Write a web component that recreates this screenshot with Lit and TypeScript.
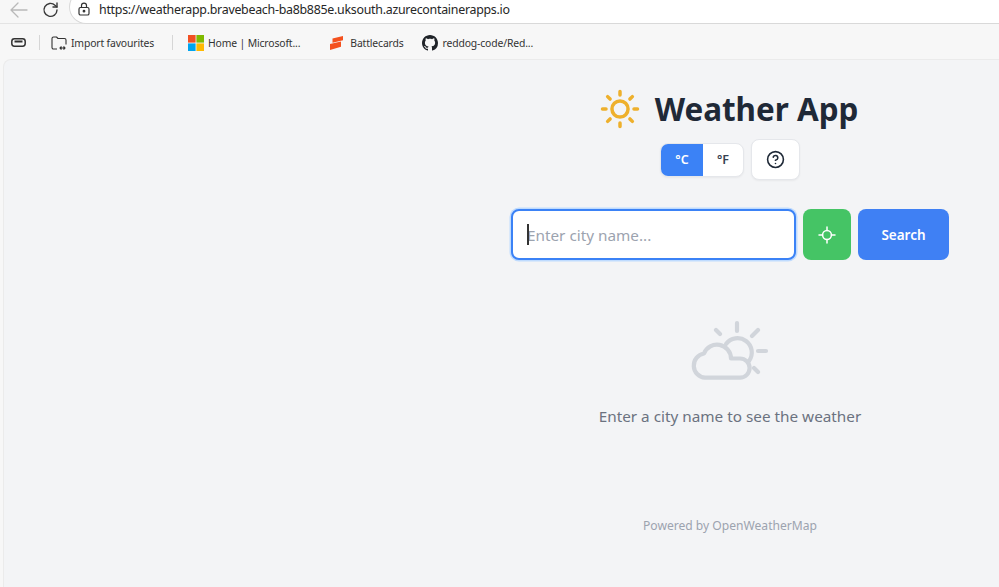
import { LitElement, html, css, svg } from 'lit';
import { customElement } from 'lit/decorators.js';

const sunIcon = svg`<svg class="sun" viewBox="0 0 24 24" fill="none" stroke="currentColor" stroke-width="2" stroke-linecap="round" stroke-linejoin="round">
  <circle cx="12" cy="12" r="4.6"></circle>
  <path d="M12 2v2M12 20v2M4.93 4.93l1.41 1.41M17.66 17.66l1.41 1.41M2 12h2M20 12h2M6.34 17.66l-1.41 1.41M19.07 4.93l-1.41 1.41"></path>
</svg>`;

const helpIcon = svg`<svg class="help" viewBox="0 0 24 24" fill="none" stroke="currentColor" stroke-width="2" stroke-linecap="round" stroke-linejoin="round">
  <circle cx="12" cy="12" r="10"></circle>
  <path d="M9.09 9a3 3 0 0 1 5.83 1c0 2-3 3-3 3"></path>
  <path d="M12 17h.01"></path>
</svg>`;

const locateIcon = svg`<svg class="locate" viewBox="0 0 18 18" fill="none" stroke="currentColor" stroke-width="1.5" stroke-linecap="round">
  <circle cx="9" cy="9" r="4.4"></circle>
  <path d="M1 9h3.5M13.5 9H17M9 1v3.5M9 13.5V17"></path>
</svg>`;

const cloudSunIcon = svg`<svg class="cloud" viewBox="0 0 80 64" fill="none" stroke="currentColor" stroke-width="4.2" stroke-linecap="round" stroke-linejoin="round">
  <path d="M48 3v8M27 10l4 4M63 16l6-6M69 31h8M65 48l4 4"></path>
  <path d="M37 24A13.5 13.5 0 0 1 60 41"></path>
  <path d="M16 57.7H51A9.6 9.6 0 0 0 51 38.5H42A14 14 0 0 0 15 33.5A12.2 12.2 0 0 0 16 57.7Z"></path>
</svg>`;

const github = svg`<svg class="fav" viewBox="0 0 16 16" fill="#1f2328"><path d="M8 0C3.58 0 0 3.58 0 8c0 3.54 2.29 6.53 5.47 7.59.4.07.55-.17.55-.38 0-.19-.01-.82-.01-1.49-2.01.37-2.53-.49-2.69-.94-.09-.23-.48-.94-.82-1.13-.28-.15-.68-.52-.01-.53.63-.01 1.08.58 1.23.82.72 1.21 1.87.87 2.33.66.07-.52.28-.87.51-1.07-1.78-.2-3.64-.89-3.64-3.95 0-.87.31-1.59.82-2.15-.08-.2-.36-1.02.08-2.12 0 0 .67-.21 2.2.82.64-.18 1.32-.27 2-.27.68 0 1.36.09 2 .27 1.53-1.04 2.2-.82 2.2-.82.44 1.1.16 1.92.08 2.12.51.56.82 1.27.82 2.15 0 3.07-1.87 3.75-3.65 3.95.29.25.54.73.54 1.48 0 1.07-.01 1.93-.01 2.2 0 .21.15.46.55.38A8.013 8.013 0 0 0 16 8c0-4.42-3.58-8-8-8z"></path></svg>`;

const microsoft = svg`<svg class="fav" viewBox="0 0 16 16">
  <rect x="0" y="0" width="7.6" height="7.6" fill="#f25022"></rect>
  <rect x="8.4" y="0" width="7.6" height="7.6" fill="#7fba00"></rect>
  <rect x="0" y="8.4" width="7.6" height="7.6" fill="#00a4ef"></rect>
  <rect x="8.4" y="8.4" width="7.6" height="7.6" fill="#ffb900"></rect>
</svg>`;

const battlecards = svg`<svg class="fav small" viewBox="0 0 14 14" fill="#f4511e">
  <path d="M2.5 2.6 13 0v4.2L2.5 6.8z"></path>
  <path d="M0 8 11 5.4v5.4L0 14z"></path>
</svg>`;

@customElement('app-root')
export class AppRoot extends LitElement {
  static styles = css`
    :host {
      display: flex;
      flex-direction: column;
      height: 587px;
      overflow: hidden;
      background: #f7f7f7;
      font-family: 'Noto Sans', 'Open Sans', sans-serif;
      color: #1f2937;
    }

    /* browser chrome */
    .addressbar {
      display: flex;
      align-items: center;
      height: 24px;
      flex: none;
      border-bottom: 1px solid #e4e4e4;
      box-sizing: border-box;
      padding-left: 9px;
      background: #f7f7f7;
    }
    .navicon {
      width: 20px;
      height: 20px;
      flex: none;
      margin-top: -4px;
    }
    .back { color: #b9b9b9; }
    .reload { color: #3a3a3a; margin-left: 12px; }
    .urlbox {
      flex: 1;
      display: flex;
      align-items: center;
      height: 34px;
      margin: -10px 0 0 8px;
      padding-top: 5px;
      box-sizing: border-box;
      background: #fff;
      border: 1px solid #d9d9d9;
      border-right: 0;
      border-radius: 17px 0 0 17px;
      font-size: 12.4px;
      letter-spacing: -0.27px;
      color: #262626;
    }
    .lock {
      width: 14px;
      height: 14px;
      margin-left: 7px;
      margin-right: 8px;
      color: #333;
    }
    .bookmarks {
      display: flex;
      align-items: center;
      height: 35px;
      flex: none;
      box-sizing: border-box;
      padding-top: 2px;
      font-size: 10.4px;
      letter-spacing: -0.15px;
      color: #333;
    }
    .pill {
      width: 15px;
      height: 9px;
      margin-left: 11px;
      color: #333;
    }
    .sep {
      width: 1px;
      height: 15px;
      background: #d6d6d6;
    }
    .sep.first { margin: 0 11px 0 13px; }
    .sep.second { margin: 0 15px 0 18px; }
    .bm {
      display: flex;
      align-items: center;
      gap: 5px;
      white-space: nowrap;
    }
    .fav {
      width: 16px;
      height: 16px;
      flex: none;
    }
    .fav.small { width: 14px; height: 14px; }
    .folder { width: 16px; height: 16px; color: #333; flex: none; }
    .bm.import { gap: 4px; }
    .bm.ms { margin-right: 30px; gap: 4px; }
    .bm.bc { margin-right: 18px; gap: 6px; }

    /* page */
    .page {
      flex: 1;
      margin-left: 3px;
      background: #f3f4f6;
      border-top: 1px solid #ebebeb;
      border-left: 1px solid #ebebeb;
      border-top-left-radius: 8px;
      display: flex;
      flex-direction: column;
      align-items: center;
      padding-left: 507px;
      padding-right: 50px;
      box-sizing: border-box;
    }
    .title {
      display: flex;
      align-items: center;
      gap: 14px;
      height: 44px;
      margin-top: 27px;
      margin-right: 3px;
    }
    .sun {
      width: 42px;
      height: 42px;
      color: #eeb02c;
    }
    h1 {
      margin: 0;
      font-size: 31.4px;
      line-height: 44px;
      font-weight: 700;
      color: #1f2937;
      white-space: nowrap;
    }
    .units {
      display: flex;
      align-items: center;
      gap: 7px;
      margin-top: 8px;
    }
    .toggle {
      display: flex;
      width: 84px;
      height: 34px;
      box-sizing: border-box;
      border: 1px solid #e5e7eb;
      border-radius: 8px;
      background: #fff;
      box-shadow: 0 1px 2px rgba(0, 0, 0, 0.05);
      overflow: hidden;
    }
    .toggle span {
      flex: 1;
      display: flex;
      align-items: center;
      justify-content: center;
      font-size: 12.5px;
      font-weight: 600;
      color: #374151;
    }
    .toggle .on {
      flex: none;
      width: 42px;
      background: #3b82f6;
      color: #fff;
    }
    .helpbtn {
      width: 49px;
      height: 41px;
      box-sizing: border-box;
      display: flex;
      align-items: center;
      justify-content: center;
      background: #fff;
      border: 1px solid #e5e7eb;
      border-radius: 8px;
      box-shadow: 0 1px 2px rgba(0, 0, 0, 0.05);
      color: #1f2937;
    }
    .help { width: 19px; height: 19px; }
    .search {
      align-self: stretch;
      display: flex;
      gap: 7px;
      height: 51px;
      margin-top: 29px;
    }
    .field {
      position: relative;
      flex: 1;
    }
    input {
      width: 100%;
      height: 100%;
      box-sizing: border-box;
      border: 2px solid #3b82f6;
      border-radius: 8px;
      outline: none;
      box-shadow: 0 0 0 1.5px #bfdbfe;
      padding: 0 14px;
      background: #fff;
      font: inherit;
      font-size: 15.3px;
    }
    input::placeholder { color: #9ca3af; opacity: 1; }
    .caret {
      position: absolute;
      left: 16px;
      top: 15px;
      width: 1.5px;
      height: 21px;
      background: #333;
    }
    .locbtn {
      width: 48px;
      border-radius: 8px;
      background: #45c465;
      color: #fff;
      display: flex;
      align-items: center;
      justify-content: center;
    }
    .locate { width: 18px; height: 18px; }
    .searchbtn {
      width: 91px;
      border-radius: 8px;
      background: #3f80f4;
      color: #fff;
      display: flex;
      align-items: center;
      justify-content: center;
      font-size: 13.5px;
      font-weight: 600;
    }
    .cloud {
      width: 80px;
      height: 64px;
      margin-top: 60px;
      margin-right: 2px;
      color: #d1d5db;
    }
    .hint {
      margin-top: 20px;
      font-size: 15.3px;
      line-height: 24px;
      color: #6b7280;
    }
    .powered {
      margin-top: 89px;
      font-size: 12.1px;
      line-height: 18px;
      color: #9ca3af;
    }
  `;

  render() {
    return html`
      <div class="addressbar">
        <svg class="navicon back" viewBox="0 0 20 20" fill="none" stroke="currentColor" stroke-width="1.3" stroke-linecap="round" stroke-linejoin="round"><path d="M18 10H2M9 3l-7 7 7 7"></path></svg>
        <svg class="navicon reload" viewBox="0 0 20 20" fill="none" stroke="currentColor" stroke-width="1.4" stroke-linecap="round" stroke-linejoin="round"><path d="M16 10a6.5 6.5 0 1 1-2-4.8L16 7"></path><path d="M16 3v4h-4"></path></svg>
        <div class="urlbox">
          <svg class="lock" viewBox="0 0 14 14" fill="none" stroke="currentColor" stroke-width="1.2"><rect x="2" y="5.5" width="10" height="7.5" rx="1.6"></rect><path d="M4.5 5.5V3.6a2.5 2.5 0 0 1 5 0v1.9"></path><circle cx="7" cy="9.2" r=".8" fill="currentColor"></circle></svg>
          <span>https://weatherapp.bravebeach-ba8b885e.uksouth.azurecontainerapps.io</span>
        </div>
      </div>
      <div class="bookmarks">
        <svg class="pill" viewBox="0 0 15 9" fill="none" stroke="currentColor" stroke-width="1.5"><rect x=".8" y=".8" width="13.4" height="7.4" rx="2.6"></rect><path d="M3.5 3.5h8" stroke-width="2"></path></svg>
        <div class="sep first"></div>
        <div class="bm import">
          <svg class="folder" viewBox="0 0 16 16" fill="none" stroke="currentColor" stroke-width="1.1" stroke-linejoin="round"><path d="M6 14H2.5A1.5 1.5 0 0 1 1 12.5v-9A1.5 1.5 0 0 1 2.5 2h3l1.5 1.5h6.5A1.5 1.5 0 0 1 15 5v4.5"></path><path d="M9 13h5M10.5 11.5 9 13l1.5 1.5M12.5 11.5 14 13l-1.5 1.5"></path></svg>
          Import favourites
        </div>
        <div class="sep second"></div>
        <div class="bm ms">${microsoft} Home | Microsoft...</div>
        <div class="bm bc">${battlecards} Battlecards</div>
        <div class="bm">${github} reddog-code/Red...</div>
      </div>
      <main class="page">
        <div class="title">${sunIcon}<h1>Weather App</h1></div>
        <div class="units">
          <div class="toggle"><span class="on">°C</span><span>°F</span></div>
          <div class="helpbtn">${helpIcon}</div>
        </div>
        <div class="search">
          <div class="field">
            <input type="text" placeholder="Enter city name..." />
            <div class="caret"></div>
          </div>
          <div class="locbtn">${locateIcon}</div>
          <div class="searchbtn">Search</div>
        </div>
        ${cloudSunIcon}
        <div class="hint">Enter a city name to see the weather</div>
        <div class="powered">Powered by OpenWeatherMap</div>
      </main>
    `;
  }
}
